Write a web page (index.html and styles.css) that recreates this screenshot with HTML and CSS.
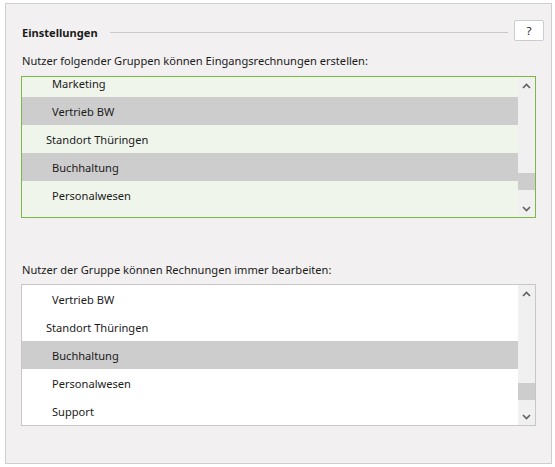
FILE: index.html
```html
<!DOCTYPE html>
<html lang="de">
<head>
<meta charset="utf-8">
<link rel="stylesheet" href="styles.css">
</head>
<body>
<div class="panel">
  <div class="header">
    <span class="title">Einstellungen</span>
    <span class="rule"></span>
    <button class="help">?</button>
  </div>

  <div class="field first">
    <div class="label">Nutzer folgender Gruppen können Eingangsrechnungen erstellen:</div>
    <div class="listbox active">
      <div class="viewport">
        <ul class="items shifted">
          <li class="item sub">Marketing</li>
          <li class="item sub selected">Vertrieb BW</li>
          <li class="item">Standort Thüringen</li>
          <li class="item sub selected">Buchhaltung</li>
          <li class="item sub">Personalwesen</li>
        </ul>
      </div>
      <div class="scrollbar">
        <span class="arrow up"><svg width="9" height="6" viewBox="0 0 9 6"><path d="M1 5 L4.5 1.5 L8 5" fill="none" stroke="#606060" stroke-width="1.6"/></svg></span>
        <span class="track"><span class="thumb thumb1"></span></span>
        <span class="arrow down"><svg width="9" height="6" viewBox="0 0 9 6"><path d="M1 1 L4.5 4.5 L8 1" fill="none" stroke="#606060" stroke-width="1.6"/></svg></span>
      </div>
    </div>
  </div>

  <div class="field second">
    <div class="label">Nutzer der Gruppe können Rechnungen immer bearbeiten:</div>
    <div class="listbox">
      <div class="viewport">
        <ul class="items">
          <li class="item sub">Vertrieb BW</li>
          <li class="item">Standort Thüringen</li>
          <li class="item sub selected">Buchhaltung</li>
          <li class="item sub">Personalwesen</li>
          <li class="item sub">Support</li>
        </ul>
      </div>
      <div class="scrollbar">
        <span class="arrow up"><svg width="9" height="6" viewBox="0 0 9 6"><path d="M1 5 L4.5 1.5 L8 5" fill="none" stroke="#606060" stroke-width="1.6"/></svg></span>
        <span class="track"><span class="thumb thumb2"></span></span>
        <span class="arrow down"><svg width="9" height="6" viewBox="0 0 9 6"><path d="M1 1 L4.5 4.5 L8 1" fill="none" stroke="#606060" stroke-width="1.6"/></svg></span>
      </div>
    </div>
  </div>
</div>
</body>
</html>
```

FILE: styles.css
```css
html, body {
  margin: 0;
  padding: 0;
  background: #ffffff;
}

body {
  font-family: "Noto Sans", "Open Sans", sans-serif;
  font-size: 11.1px;
  color: #1b1b1b;
}

.panel {
  margin: 3px 0 0 5px;
  width: 515px;
  height: 443px;
  padding: 16px 15px 0 15px;
  background: #f2f0f0;
  border: 1px solid #cfcdcd;
}

.header {
  display: flex;
  align-items: center;
  height: 21px;
  margin-right: -8px;
}

.title {
  font-weight: bold;
  padding-left: 1px;
  line-height: 16px;
  padding-top: 4px;
}

.rule {
  flex: 1;
  height: 1px;
  background: #c9c9c9;
  margin: 3px 6px 0 12px;
}

.help {
  width: 30px;
  height: 21px;
  padding: 0;
  background: #ffffff;
  border: 1px solid #cccccc;
  border-radius: 2px;
  font-family: inherit;
  font-size: 11.5px;
  color: #1b1b1b;
  line-height: 18px;
}

.field.first {
  margin-top: 12px;
}

.field.second {
  margin-top: 44px;
}

.label {
  line-height: 16px;
  padding-left: 1px;
  margin-bottom: 7px;
}

.second .label {
  margin-bottom: 6px;
}

.listbox {
  display: flex;
  height: 140px;
  border: 1px solid #c8c6c6;
  background: #ffffff;
}

.listbox.active {
  border-color: #7cb944;
  background: #f0f5eb;
}

.viewport {
  flex: 1;
  overflow: hidden;
}

.items {
  list-style: none;
  margin: 0;
  padding: 0;
}

.items.shifted {
  margin-top: -8px;
}

.item {
  height: 28px;
  line-height: 29px;
  padding-left: 24px;
  white-space: nowrap;
}

.item.sub {
  padding-left: 30px;
}

.item.selected {
  background: #cdcdcd;
}

.scrollbar {
  width: 17px;
  display: flex;
  flex-direction: column;
  background: #f0f0f0;
}

.arrow {
  height: 17px;
  display: flex;
  align-items: center;
  justify-content: center;
}

.track {
  flex: 1;
  position: relative;
}

.thumb {
  position: absolute;
  left: 0;
  right: 0;
  background: #cdcdcd;
  height: 17px;
}

.thumb1 {
  top: 79px;
}

.thumb2 {
  top: 81px;
}
```
